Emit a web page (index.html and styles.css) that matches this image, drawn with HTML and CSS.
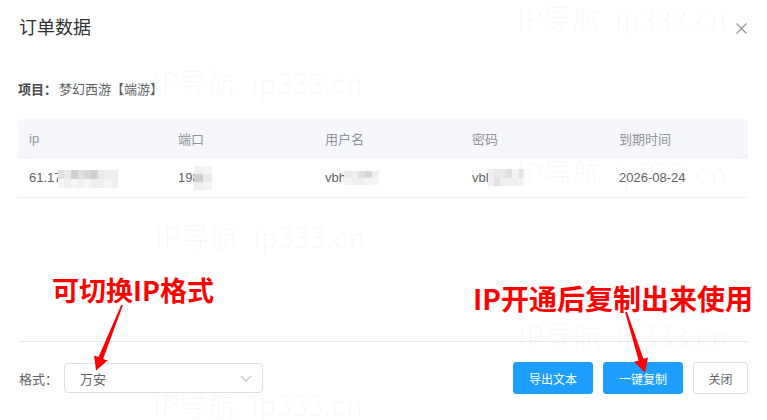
FILE: index.html
```html
<!DOCTYPE html>
<html lang="zh-CN">
<head>
<meta charset="utf-8">
<title>订单数据</title>
<link rel="stylesheet" href="styles.css">
</head>
<body>
<div class="dialog">
  <div class="header">
    <h1 class="title">订单数据</h1>
    <span class="close" aria-label="关闭">
      <svg width="11" height="11" viewBox="0 0 11 11"><path d="M0.5 0.5 L10.5 10.5 M10.5 0.5 L0.5 10.5" stroke="#909399" stroke-width="1.2" fill="none"/></svg>
    </span>
  </div>

  <div class="body">
    <div class="project"><b>项目：</b>梦幻西游【端游】</div>

    <div class="table">
      <div class="tr thead">
        <div class="td">ip</div>
        <div class="td">端口</div>
        <div class="td">用户名</div>
        <div class="td">密码</div>
        <div class="td">到期时间</div>
      </div>
      <div class="tr tbody">
        <div class="td">61.17<span class="mosaic m-ip"><i class="a"></i><i class="b"></i><i class="c"></i><i class="a"></i><i class="d"></i><i class="c"></i><i class="b"></i><i class="e"></i><i class="e"></i><i class="f"></i><i class="e"></i><i class="f"></i><i class="e"></i><i class="f"></i><i class="e"></i><i class="e"></i><i class="f"></i><i class="e"></i></span></div>
        <div class="td">19<span class="part">8</span><span class="mosaic m-port"><i class="e"></i><i class="f"></i><i class="c"></i><i class="b"></i><i class="e"></i><i class="f"></i></span></div>
        <div class="td">vbh<span class="mosaic m-user"><i class="b"></i><i class="e"></i><i class="a"></i><i class="d2"></i><i class="e"></i><i class="f"></i><i class="e"></i><i class="e"></i><i class="f"></i><i class="f"></i></span></div>
        <div class="td">vbl<span class="mosaic m-pass"><i class="e"></i><i class="b"></i><i class="b"></i><i class="a"></i><i class="f"></i><i class="b"></i><i class="e"></i><i class="a"></i><i class="e"></i><i class="e"></i><i class="e"></i><i class="f"></i></span></div>
        <div class="td">2026-08-24</div>
      </div>
    </div>
  </div>

  <div class="footer">
    <div class="format">
      <span class="label">格式：</span>
      <div class="select">
        <span>万安</span>
        <svg class="chevron" width="12" height="7" viewBox="0 0 12 7"><path d="M0.8 0.8 L6 6 L11.2 0.8" stroke="#c0c4cc" stroke-width="1.2" fill="none"/></svg>
      </div>
    </div>
    <div class="actions">
      <button class="btn primary">导出文本</button>
      <button class="btn primary">一键复制</button>
      <button class="btn plain">关闭</button>
    </div>
  </div>

  <div class="watermark w1">IP导航&nbsp;&nbsp;ip333.cn</div>
  <div class="watermark w2">IP导航&nbsp;&nbsp;ip333.cn</div>
  <div class="watermark w3">IP导航&nbsp;&nbsp;ip333.cn</div>
  <div class="watermark w4">IP导航&nbsp;&nbsp;ip333.cn</div>
  <div class="watermark w5">IP导航&nbsp;&nbsp;ip333.cn</div>
  <div class="watermark w6">IP导航&nbsp;&nbsp;ip333.cn</div>

  <div class="note note-left">可切换IP格式</div>
  <div class="note note-right">IP开通后复制出来使用</div>
  <svg class="arrows" width="767" height="420" viewBox="0 0 767 420">
    <polygon fill="#ff0000" points="121.3,304.7 122.9,305.3 103.1,358.9 107.6,360.6 96,370.5 94.1,355.4 98.5,357.1"/>
    <polygon fill="#ff0000" points="625.1,312.2 626.9,311.8 643.4,358.8 648,357.4 645,372.5 634,361.8 638.6,360.4"/>
  </svg>
</div>
</body>
</html>
```

FILE: styles.css
```css
* { box-sizing: border-box; }
html, body {
  margin: 0;
  padding: 0;
  background: #ffffff;
}
body {
  width: 767px;
  height: 420px;
  overflow: hidden;
  font-family: "Liberation Sans", "Noto Sans CJK SC", sans-serif;
  color: #606266;
  font-size: 13px;
}
.dialog {
  position: relative;
  width: 767px;
  height: 420px;
  display: flex;
  flex-direction: column;
}
.header {
  height: 41px;
  padding: 15px 19px 0 19px;
  display: flex;
  justify-content: space-between;
  align-items: flex-start;
}
.title {
  margin: 0;
  font-size: 18px;
  line-height: 26px;
  font-weight: normal;
  color: #303133;
}
.close {
  display: flex;
  margin-top: 8px;
  margin-right: 1px;
}
.body {
  flex: 1;
  padding: 0 19px 0 18px;
}
.project {
  margin-top: 39px;
  line-height: 20px;
  font-size: 13px;
  color: #606266;
}
.project b {
  color: #4a4a4a;
  font-weight: bold;
  margin-right: 2px;
}
.table {
  margin-top: 19px;
}
.tr {
  display: grid;
  grid-template-columns: 149px 147px 147px 147px 1fr;
  border-bottom: 1px solid #ebeef5;
}
.thead {
  height: 39px;
  background: #f5f7fa;
  border-radius: 4px 4px 0 0;
  color: #909399;
}
.tbody {
  height: 40px;
  color: #606266;
}
.td {
  padding-left: 11px;
  display: flex;
  align-items: center;
  white-space: nowrap;
}
.part {
  display: inline-block;
  width: 4px;
  overflow: hidden;
}
.mosaic {
  display: inline-grid;
}
.mosaic i {
  display: block;
  background: #eeeeee;
}
.mosaic i.a { background: #e0e0e0; }
.mosaic i.b { background: #e9e9e9; }
.mosaic i.c { background: #d0d0d0; }
.mosaic i.d { background: #d8d8d8; }
.mosaic i.d2 { background: #d6d6d6; }
.mosaic i.e { background: #efefef; }
.mosaic i.f { background: #f5f5f5; }
.m-ip {
  grid-template-columns: repeat(9, 6.7px);
  grid-template-rows: 9px 9px;
  margin-top: 3px;
  margin-left: -4px;
}
.m-port {
  grid-template-columns: 9px 9px;
  grid-template-rows: 8px 8px 8px;
  margin-left: -2px;
}
.m-user {
  grid-template-columns: repeat(5, 7px);
  grid-template-rows: 7px 7px;
  margin-left: -2px;
}
.m-pass {
  grid-template-columns: repeat(6, 6px);
  grid-template-rows: 8.5px 8.5px;
  margin-left: -1px;
}
.footer {
  margin: 0 19px 0 19px;
  border-top: 1px solid #e6e6e6;
  padding: 20px 0 26px;
  display: flex;
  justify-content: space-between;
  align-items: center;
}
.format {
  display: flex;
  align-items: center;
}
.label {
  width: 45px;
  color: #606266;
  font-size: 13px;
}
.select {
  width: 199px;
  height: 30px;
  border: 1px solid #dcdfe6;
  border-radius: 4px;
  padding: 0 10px 0 15px;
  display: flex;
  align-items: center;
  justify-content: space-between;
  color: #606266;
  font-size: 13px;
}
.actions {
  display: flex;
  gap: 10px;
}
.btn {
  height: 32px;
  border-radius: 3px;
  font-family: "Liberation Sans", "Noto Sans CJK SC", sans-serif;
  font-size: 12px;
  padding: 0;
  cursor: pointer;
}
.btn.primary {
  width: 80px;
  background: #1e9fff;
  border: 1px solid #1e9fff;
  color: #ffffff;
}
.btn.plain {
  width: 55px;
  background: #ffffff;
  border: 1px solid #dcdfe6;
  color: #606266;
}
.watermark {
  position: absolute;
  font-family: "Noto Sans CJK SC", "Liberation Sans", sans-serif;
  font-weight: 300;
  font-size: 28px;
  letter-spacing: 0.8px;
  line-height: 30px;
  color: rgba(0, 0, 0, 0.045);
  white-space: nowrap;
  pointer-events: none;
}
.w1 { left: 517px; top: 3px; }
.w2 { left: 153px; top: 67px; }
.w3 { left: 517px; top: 157px; }
.w4 { left: 155px; top: 221px; }
.w5 { left: 518px; top: 320px; }
.w6 { left: 153px; top: 389px; }
.note {
  position: absolute;
  font-family: "Noto Sans CJK SC", "Liberation Sans", sans-serif;
  font-weight: bold;
  font-size: 27px;
  line-height: 32px;
  color: #ff0000;
  white-space: nowrap;
}
.note-left { left: 52px; top: 274px; }
.note-right { left: 473px; top: 282px; font-size: 28px; }
.arrows {
  position: absolute;
  left: 0;
  top: 0;
  pointer-events: none;
}
```
